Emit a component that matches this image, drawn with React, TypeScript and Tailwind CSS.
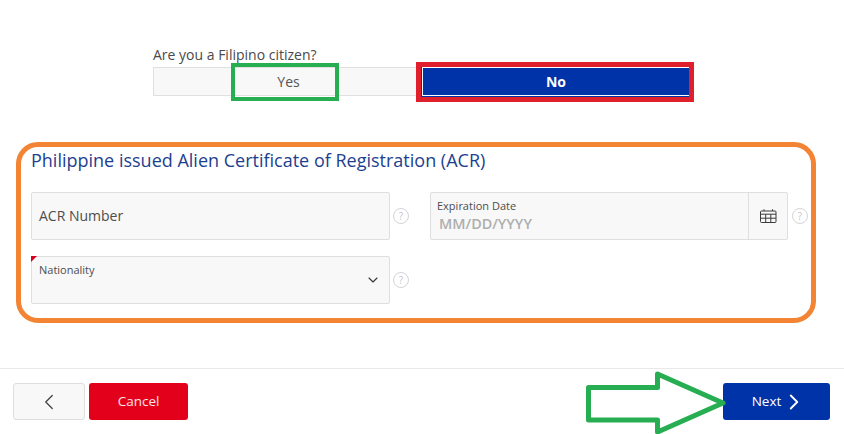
import { ChevronDown, ChevronLeft, ChevronRight } from "lucide-react";

const FONT = "font-['Open_Sans','Noto_Sans',sans-serif]";

function HelpIcon() {
  return (
    <span className="w-[16px] h-[16px] shrink-0 rounded-full border border-[#d4d4d4] flex items-center justify-center text-[10px] leading-none text-[#c4c4c4]">
      ?
    </span>
  );
}

function CalendarIcon() {
  return (
    <svg width="17" height="14" viewBox="0 0 17 14" fill="none" stroke="#3a3a3a" strokeWidth="1">
      <rect x="0.5" y="2" width="15.5" height="11.5" rx="1" />
      <path d="M0.5 5.2H16M0.5 9.2H16M5.7 5.2V13.5M10.8 5.2V13.5M4 0.3V2M12.5 0.3V2" />
    </svg>
  );
}

export default function App() {
  return (
    <div className={`${FONT} relative w-[844px] h-[434px] bg-white overflow-hidden flex flex-col`}>
      {/* citizen toggle */}
      <div className="ml-[153px] w-[537px] h-[96px] pt-[45px]">
        <p className="text-[14px] leading-[19px] text-[#4a4a4a]">Are you a Filipino citizen?</p>
        <div className="flex h-[29px] mt-[3px]">
          <button className="w-[269px] bg-[#f8f8f8] border border-[#e0e0e0] text-[14px] text-[#555] pl-[2px]">Yes</button>
          <button className="flex-1 bg-[#0033a8] border border-white outline outline-1 outline-[#0033a8] text-[14px] font-bold text-white">
            No
          </button>
        </div>
      </div>

      {/* ACR section */}
      <section className="ml-[31px] mt-[52px] w-[785px] h-[220px]">
        <h2 className="text-[18px] leading-[24px] text-[#1d3f8f]">Philippine issued Alien Certificate of Registration (ACR)</h2>
        <div className="mt-[20px] grid grid-cols-[399px_380px] gap-y-[16px]">
          <div className="flex items-center gap-[3px]">
            <div className="w-[359px] shrink-0 h-[48px] bg-[#f8f8f8] border border-[#dfdfdf] rounded-[2px] flex items-center px-[7px] pb-[2px] text-[14px] text-[#4d4d4d]">
              ACR Number
            </div>
            <HelpIcon />
          </div>
          <div className="flex items-center gap-[4px]">
            <div className="w-[358px] shrink-0 h-[48px] bg-[#f8f8f8] border border-[#dfdfdf] rounded-[2px] flex">
              <div className="flex-1 pl-[6px] pt-[6px]">
                <p className="text-[11px] leading-[14px] text-[#4d4d4d]">Expiration Date</p>
                <p className="text-[14.4px] leading-[20px] mt-[1px] ml-[2px] font-semibold text-[#aeaeae]">MM/DD/YYYY</p>
              </div>
              <div className="w-[39px] border-l border-[#dfdfdf] flex items-center justify-center">
                <CalendarIcon />
              </div>
            </div>
            <HelpIcon />
          </div>
          <div className="flex items-center gap-[3px]">
            <div className="relative w-[359px] shrink-0 h-[48px] bg-[#f8f8f8] border border-[#dfdfdf] rounded-[2px] flex justify-between pl-[7px] pr-[8px]">
              <span className="absolute -left-px -top-px w-0 h-0 border-t-[6px] border-r-[6px] border-t-[#d6001c] border-r-transparent" />
              <span className="text-[11px] leading-[14px] pt-[6px] text-[#4d4d4d]">Nationality</span>
              <ChevronDown size={16} strokeWidth={1.6} className="text-[#333] mt-[15px]" />
            </div>
            <HelpIcon />
          </div>
        </div>
      </section>

      {/* footer */}
      <footer className="h-[66px] border-t border-[#e8e8e8] flex items-start justify-between pl-[13px] pr-[14px] pt-[14px]">
        <div className="flex gap-[4px]">
          <button className="w-[72px] h-[37px] bg-[#f8f8f8] border border-[#dedede] rounded-[3px] flex items-center justify-center text-[#444]">
            <ChevronLeft size={26} strokeWidth={1.2} />
          </button>
          <button className="w-[99px] h-[37px] bg-[#e2001a] rounded-[3px] text-[13.5px] font-medium text-white/90">Cancel</button>
        </div>
        <button className="w-[107px] h-[37px] bg-[#0033a8] rounded-[3px] flex items-center justify-center pl-[6px] text-[13.5px] font-medium text-white">
          Next
          <ChevronRight size={26} strokeWidth={1.7} />
        </button>
      </footer>

      {/* annotation marks drawn over the screenshot */}
      <div className="absolute left-[231px] top-[63px] w-[108px] h-[38px] border-[4.5px] border-[#27ae52]" />
      <div className="absolute left-[416px] top-[62px] w-[278px] h-[40px] border-[5px] border-[#e01f2d]" />
      <div className="absolute left-[16px] top-[142px] w-[800px] h-[181px] border-[5px] border-[#f28433] rounded-[22px]" />
      <svg className="absolute left-[580px] top-[365px]" width="152" height="69" viewBox="0 0 152 69" fill="none">
        <path d="M8.5 22.5H77.5V9L143 38L77.5 67V55H8.5Z" stroke="#27ae52" strokeWidth="5" strokeLinejoin="round" />
      </svg>
    </div>
  );
}
